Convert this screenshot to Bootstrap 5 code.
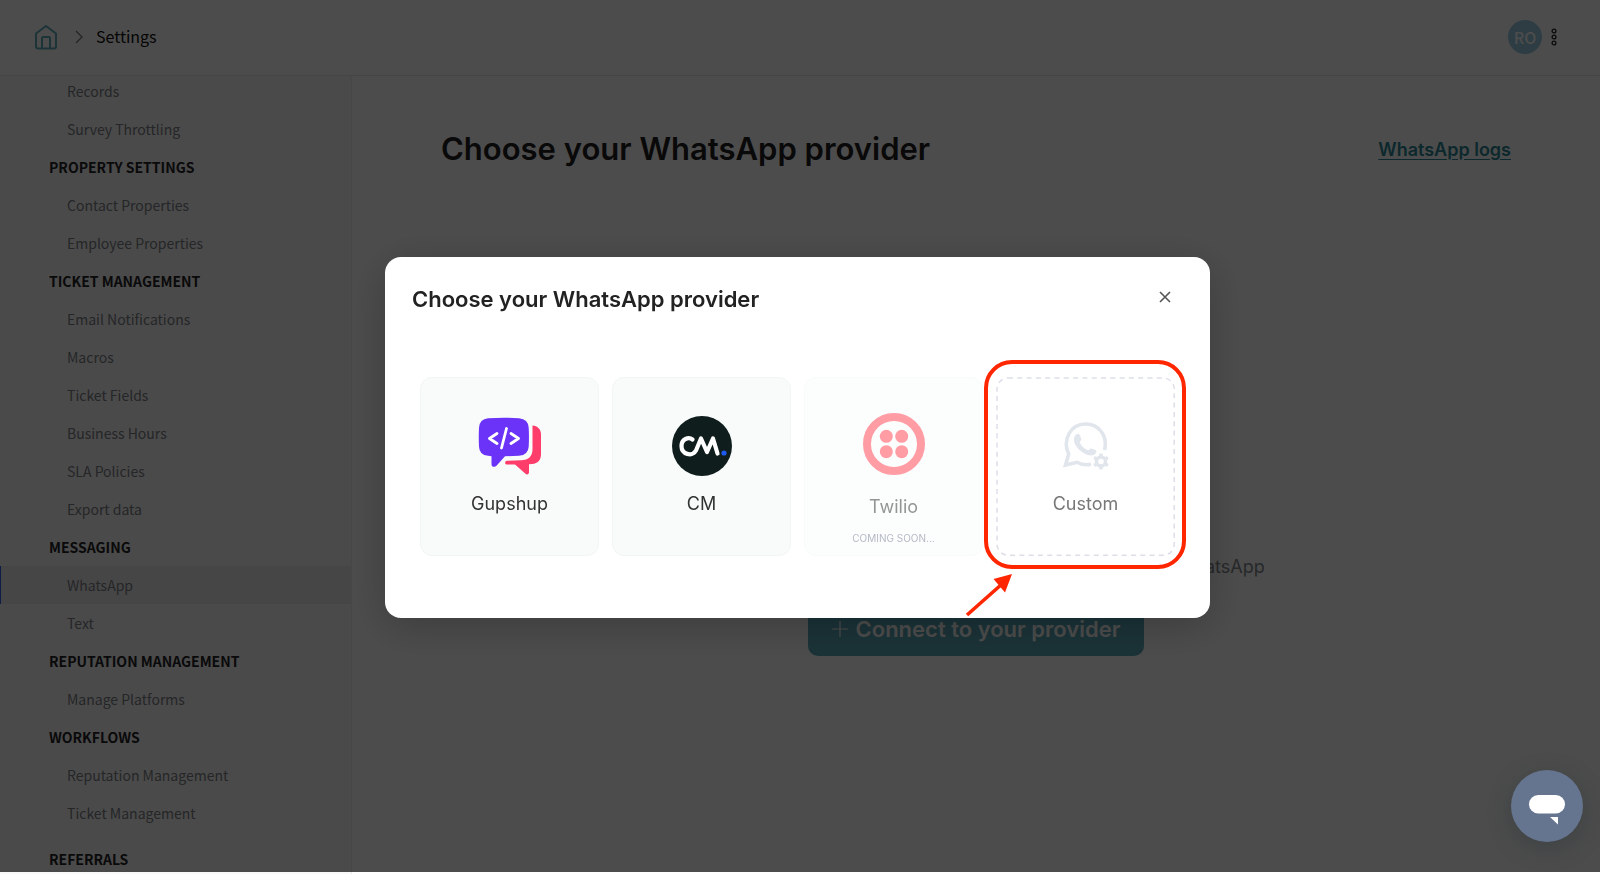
<!DOCTYPE html>
<html lang="en">
<head>
<meta charset="utf-8">
<meta name="viewport" content="width=device-width, initial-scale=1">
<title>Settings - WhatsApp provider</title>
<link href="https://cdn.jsdelivr.net/npm/bootstrap@5.3.0/dist/css/bootstrap.min.css" rel="stylesheet">
<style>
:root { --ui: Inter, "Liberation Sans", sans-serif; --side: "Noto Sans CJK SC", "Open Sans", sans-serif; }
body { font-family: var(--ui); background: #fff; color: #1f2023; }
.shell { height: 100vh; overflow: hidden; }
.topbar { height: 76px; padding: 0 42px 1px 34px; border-bottom: 1px solid #e8e8e8; font-family: var(--side); }
.crumb { font-size: 16px; line-height: 24px; padding-bottom: 2px; color: #111; }
.avatar { width: 34px; height: 34px; background: #98cbe2; color: #fff; font-size: 16px; line-height: 34px; }
.sidebar { width: 352px; background: #f9f9f9; border-right: 1px solid #eee; font-family: var(--side); overflow: hidden; }
.side-list { margin-top: -4px; }
.side-list li { line-height: 38px; height: 38px; font-size: 14px; white-space: nowrap; }
.side-head { padding-left: 49px; font-weight: 700; color: #222426; }
.side-head.spaced { margin-top: 8px; }
.side-list a { display: block; padding-left: 67px; color: #7c8085; text-decoration: none; }
.side-list a.current { background: #ececec; box-shadow: inset 1px 0 #2f62e0; }
.content { padding: 54px 89px 0; }
.page-title { font-size: 31px; line-height: 38px; font-weight: 600; }
.logs { font-size: 18px; font-weight: 600; color: #2c8795; text-underline-offset: 3px; }
.empty { margin-top: 386px; gap: 22px; }
.empty p { font-size: 18px; line-height: 26px; color: #84878c; }
.connect { background: #5aa9b8; color: #fff; width: 336px; height: 54px; border-radius: 10px; font-size: 22px; font-weight: 600; border: 0; }
.shade { position: fixed; inset: 0 0 2px; background: rgba(0,0,0,.7); z-index: 1050; }
.modal { padding-right: 5px; }
.provider-dialog { max-width: 825px; }
.provider-box { border: 0; border-radius: 16px; box-shadow: 0 8px 40px rgba(0,0,0,.22); padding: 28px 35px 62px; }
.provider-head { margin: 0 -8px 63px; height: 29px; }
.provider-head h2 { font-size: 22px; line-height: 28px; font-weight: 600; color: #222; }
.close-x { width: 24px; height: 24px; margin: 0 6px 5px 0; background: none; border: 0; }
.tiles { display: grid; grid-template-columns: repeat(4, 1fr); gap: 13px; }
.tile { position: relative; aspect-ratio: 1; border-radius: 12px; border: 1px solid #f0f5f5; background: #f9fbfb; color: #333; font-size: 18px; line-height: 24px; padding: 36px 0 0; display: flex; flex-direction: column; align-items: center; }
.tile svg { display: block; }
.tile .pic { height: 64px; display: flex; align-items: center; margin-bottom: 14px; }
.tile.soon { background: #fcfefe; border-color: #f7fbfb; color: #949696; padding-top: 34px; }
.tile.soon .pic { margin-bottom: 19px; }
.tile.soon small { font-size: 10px; line-height: 14px; color: #b4b8c4; margin-top: 12px; }
.tile.custom { background: none; border: 0; color: #777; padding-top: 37px; }
.dashes { position: absolute; inset: 0; width: 100%; height: 100%; }
.callout { position: absolute; inset: -17px -11px -13px -12px; border: 4px solid #ff2600; border-radius: 28px; pointer-events: none; }
.pointer { position: absolute; left: -32px; bottom: -61px; pointer-events: none; }
.chat { position: fixed; right: 17px; bottom: 32px; width: 72px; height: 72px; border-radius: 50%; border: 0; padding: 0; background: #66758f; box-shadow: 0 6px 24px rgba(30,45,50,.3); z-index: 1060; }
</style>
</head>
<body>
<div class="shell d-flex flex-column">
  <header class="topbar d-flex align-items-center flex-shrink-0">
    <a href="#" aria-label="Home"><svg class="d-block" width="24" height="26" viewBox="0 0 24 26" fill="none" stroke="#5fb0bb" stroke-width="2" stroke-linejoin="round"><path d="M2 9.500 12 2l10 7.500V22.500a2 2 0 0 1-2 2H4a2 2 0 0 1-2-2zM8 24.500V14a1 1 0 0 1 1-1h6a1 1 0 0 1 1 1v10.500"/></svg></a>
    <svg class="ms-3" width="10" height="14" viewBox="0 0 10 14" fill="none" stroke="#777" stroke-width="1.200"><path d="m2 1 6 6-6 6"/></svg>
    <span class="crumb ms-2 ps-1">Settings</span>
    <div class="ms-auto d-flex align-items-center gap-2">
      <span class="avatar rounded-circle text-center fw-medium">RO</span>
      <button class="btn p-0 border-0" aria-label="More"><svg class="d-block" width="8" height="18" viewBox="0 0 8 18" fill="none" stroke="#222" stroke-width="1.300"><circle cx="4" cy="3" r="1.900"/><circle cx="4" cy="9" r="1.900"/><circle cx="4" cy="15" r="1.900"/></svg></button>
    </div>
  </header>
  <div class="d-flex flex-grow-1 overflow-hidden">
    <nav class="sidebar flex-shrink-0">
      <ul class="side-list list-unstyled mb-0">
        <li><a href="#">Records</a></li>
        <li><a href="#">Survey Throttling</a></li>
        <li class="side-head">PROPERTY SETTINGS</li>
        <li><a href="#">Contact Properties</a></li>
        <li><a href="#">Employee Properties</a></li>
        <li class="side-head">TICKET MANAGEMENT</li>
        <li><a href="#">Email Notifications</a></li>
        <li><a href="#">Macros</a></li>
        <li><a href="#">Ticket Fields</a></li>
        <li><a href="#">Business Hours</a></li>
        <li><a href="#">SLA Policies</a></li>
        <li><a href="#">Export data</a></li>
        <li class="side-head">MESSAGING</li>
        <li><a href="#" class="current">WhatsApp</a></li>
        <li><a href="#">Text</a></li>
        <li class="side-head">REPUTATION MANAGEMENT</li>
        <li><a href="#">Manage Platforms</a></li>
        <li class="side-head">WORKFLOWS</li>
        <li><a href="#">Reputation Management</a></li>
        <li><a href="#">Ticket Management</a></li>
        <li class="side-head spaced">REFERRALS</li>
      </ul>
    </nav>
    <main class="content flex-grow-1">
      <div class="d-flex align-items-center justify-content-between">
        <h1 class="page-title mb-0">Choose your WhatsApp provider</h1>
        <a class="logs" href="#">WhatsApp logs</a>
      </div>
      <div class="empty d-flex flex-column align-items-center">
        <p class="mb-0">Connect to your provider to start sending messages over WhatsApp</p>
        <button class="connect d-flex align-items-center justify-content-center gap-2"><svg width="16" height="16" viewBox="0 0 16 16" stroke="#fff" stroke-width="1.200"><path d="M8 0v16M0 8h16"/></svg>Connect to your provider</button>
      </div>
    </main>
  </div>
</div>

<div class="shade"></div>

<div class="modal d-block" role="dialog" aria-labelledby="dlg">
  <div class="modal-dialog modal-dialog-centered provider-dialog">
    <div class="modal-content provider-box">
      <div class="provider-head d-flex align-items-center justify-content-between">
        <h2 class="mb-0" id="dlg">Choose your WhatsApp provider</h2>
        <button class="close-x p-0" aria-label="Close"><svg class="d-block m-auto" width="12" height="12" viewBox="0 0 12 12" stroke="#555" stroke-width="1.600"><path d="m1 1 10 10M11 1 1 11"/></svg></button>
      </div>
      <div class="tiles">
        <button class="tile">
          <span class="pic"><svg width="64" height="58" viewBox="0 0 64 58"><path fill="#ff3d6b" d="M54.500 8.500c5 .5 8.500 3.500 8.500 9V37c0 6-3 9.500-9 10l-3 .3v8c0 2-2 2.700-3.500 1.500L37 47.500h-8c-2.500 0-2.500-3.500 0-3.700l14-.5c8-.3 11.500-4 11.500-11.500z"/><path fill="#6b33f7" d="M10 1.200Q26 .2 41 1.200q9.300.8 9.700 9.500.5 9.500 0 19-.5 8.300-9.700 9-8 .5-14 .5l-8.500 9.500c-1.700 2-5 1.300-5-1.500v-8l-3.500-.5Q1.300 38 1 29.700q-.5-9.500 0-19Q1.500 2 10 1.200z"/><path fill="none" stroke="#fff" stroke-width="2.800" stroke-linecap="round" stroke-linejoin="round" d="m19 16.500-7.500 5 7.500 5M28.500 11.500l-5 19.500M33 16.500l7.500 5-7.500 5"/></svg></span>
          Gupshup
        </button>
        <button class="tile">
          <span class="pic"><svg width="60" height="60" viewBox="0 0 60 60"><circle cx="30" cy="30" r="30" fill="#101d1d"/><path fill="none" stroke="#fff" stroke-width="4.200" stroke-linecap="round" stroke-linejoin="round" d="M20.500 23.500c-4-3-11-.5-11 6.500 0 8.500 10.500 11 14.500 4.500L29 22.500l6 13.500 6-13.500L45.500 37.500"/><circle cx="52" cy="37" r="2.600" fill="#1d5bf0"/></svg></span>
          CM
        </button>
        <button class="tile soon" aria-disabled="true">
          <span class="pic"><svg width="62" height="62" viewBox="0 0 62 62" fill="#ff9ca4"><circle cx="31" cy="31" r="27" fill="none" stroke="#ff9ca4" stroke-width="8"/><circle cx="23.300" cy="23.300" r="6.500"/><circle cx="38.700" cy="23.300" r="6.500"/><circle cx="23.300" cy="38.700" r="6.500"/><circle cx="38.700" cy="38.700" r="6.500"/></svg></span>
          Twilio
          <small>COMING SOON...</small>
        </button>
        <button class="tile custom">
          <svg class="dashes"><rect x="1" y="1" width="99%" height="99%" rx="11" fill="none" stroke="#dcdfe8" stroke-width="1.500" stroke-dasharray="5 4.300"/></svg>
          <span class="pic"><svg width="46" height="48" viewBox="0 0 46 48"><path fill="none" stroke="#e1e5ec" stroke-width="3.600" d="M28 42.300c-5.500 1.200-10 .3-14-2L2.500 43l3.200-11C-1 18 7.500 2 22.500 2 36 2 45 14 41.500 28"/><path fill="#e1e5ec" d="M13 12.500c2-1.500 3.300-.5 4 1l1.300 3.200c.5 1.300-1.700 3-1.600 3.800 1.500 3.500 4.800 6.600 8.300 7.800 1 .2 2-2 3.300-1.800l4.500 1.800c1 .5.700 1.800.2 2.700-1.500 2.500-5 3-8 2C17.500 30.500 11.500 24 11 18.500c-.2-2.500.5-4.700 2-6z"/><circle cx="38" cy="39.500" r="4.500" fill="none" stroke="#e1e5ec" stroke-width="3.400"/><path stroke="#e1e5ec" stroke-width="3.400" d="M38 31.500V35M38 44v3.500M31.100 35.500l3 1.700M41.900 41.800l3 1.700M44.900 35.500l-3 1.700M34.100 41.800l-3 1.700"/></svg></span>
          Custom
          <span class="callout"></span>
          <svg class="pointer" width="52" height="46" viewBox="0 0 52 46"><path d="M3 44 38 13" stroke="#ff2600" stroke-width="3.600"/><path fill="#ff2600" d="M48 3 41 21.500 29.500 8z"/></svg>
        </button>
      </div>
    </div>
  </div>
</div>

<button class="chat" aria-label="Open chat"><svg width="72" height="72" viewBox="0 0 72 72" fill="#fff"><rect x="18" y="25" width="36" height="18.500" rx="9.200"/><path d="M39 47h8v7.500z"/></svg></button>
<script src="https://cdn.jsdelivr.net/npm/bootstrap@5.3.0/dist/js/bootstrap.bundle.min.js"></script>
</body>
</html>
